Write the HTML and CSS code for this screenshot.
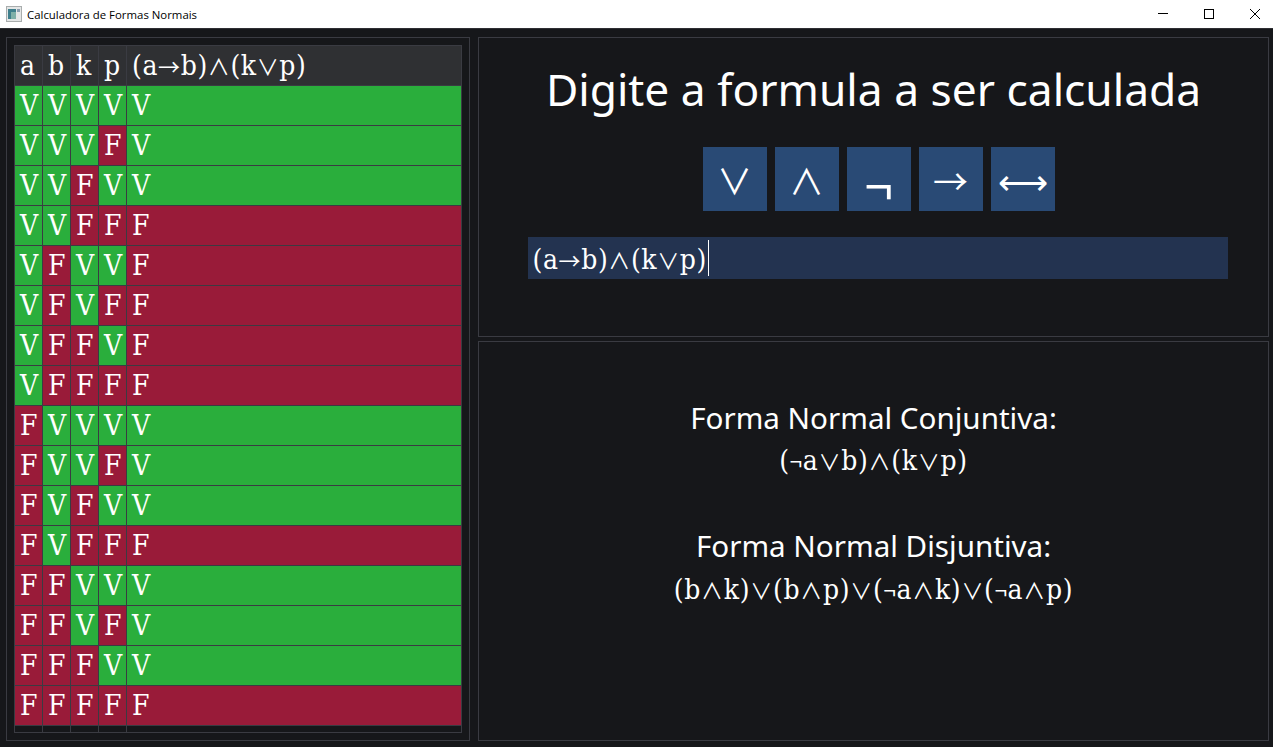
FILE: index.html
```html
<!DOCTYPE html>
<html lang="en">
<head>
  <meta charset="UTF-8">
  <title>Calculadora de Formas Normais</title>
  <link rel="stylesheet" href="styles.css">
</head>
<body>
<header class="titlebar">
  <svg class="appIcon" width="16" height="16" viewBox="0 0 16 16">
    <rect x="0.5" y="0.5" width="15" height="15" fill="#e4e6e6" stroke="#a9adad"/>
    <rect x="2" y="3" width="8" height="10" fill="#3e7f8c"/>
    <rect x="5" y="6" width="5" height="7" fill="#7fb0a8"/>
    <rect x="11" y="3" width="3" height="3" fill="#8b9eb0"/>
  </svg>
  <span class="windowTitle">Calculadora de Formas Normais</span>
  <div class="windowButtons">
    <svg width="12" height="12" viewBox="0 0 12 12"><path d="M1 5.5H11" stroke="#000"/></svg>
    <svg width="12" height="12" viewBox="0 0 12 12"><rect x="1.5" y="1.5" width="9" height="9" fill="none" stroke="#000"/></svg>
    <svg width="12" height="12" viewBox="0 0 12 12"><path d="M1 1L11 11M11 1L1 11" stroke="#000"/></svg>
  </div>
</header>

<main class="content">
  <section class="panel tablePanel">
    <table class="truthTable">
      <thead>
        <tr><th>a</th><th>b</th><th>k</th><th>p</th><th>(a<i>→</i>b)<i>∧</i>(k<i>∨</i>p)</th></tr>
      </thead>
      <tbody>
        <tr><td class="v">V</td><td class="v">V</td><td class="v">V</td><td class="v">V</td><td class="v">V</td></tr>
        <tr><td class="v">V</td><td class="v">V</td><td class="v">V</td><td class="f">F</td><td class="v">V</td></tr>
        <tr><td class="v">V</td><td class="v">V</td><td class="f">F</td><td class="v">V</td><td class="v">V</td></tr>
        <tr><td class="v">V</td><td class="v">V</td><td class="f">F</td><td class="f">F</td><td class="f">F</td></tr>
        <tr><td class="v">V</td><td class="f">F</td><td class="v">V</td><td class="v">V</td><td class="f">F</td></tr>
        <tr><td class="v">V</td><td class="f">F</td><td class="v">V</td><td class="f">F</td><td class="f">F</td></tr>
        <tr><td class="v">V</td><td class="f">F</td><td class="f">F</td><td class="v">V</td><td class="f">F</td></tr>
        <tr><td class="v">V</td><td class="f">F</td><td class="f">F</td><td class="f">F</td><td class="f">F</td></tr>
        <tr><td class="f">F</td><td class="v">V</td><td class="v">V</td><td class="v">V</td><td class="v">V</td></tr>
        <tr><td class="f">F</td><td class="v">V</td><td class="v">V</td><td class="f">F</td><td class="v">V</td></tr>
        <tr><td class="f">F</td><td class="v">V</td><td class="f">F</td><td class="v">V</td><td class="v">V</td></tr>
        <tr><td class="f">F</td><td class="v">V</td><td class="f">F</td><td class="f">F</td><td class="f">F</td></tr>
        <tr><td class="f">F</td><td class="f">F</td><td class="v">V</td><td class="v">V</td><td class="v">V</td></tr>
        <tr><td class="f">F</td><td class="f">F</td><td class="v">V</td><td class="f">F</td><td class="v">V</td></tr>
        <tr><td class="f">F</td><td class="f">F</td><td class="f">F</td><td class="v">V</td><td class="v">V</td></tr>
        <tr><td class="f">F</td><td class="f">F</td><td class="f">F</td><td class="f">F</td><td class="f">F</td></tr>
        <tr class="filler"><td></td><td></td><td></td><td></td><td></td></tr>
      </tbody>
    </table>
  </section>

  <div class="rightColumn">
    <section class="panel inputPanel">
      <h1 class="heading">Digite a formula a ser calculada</h1>
      <div class="operators">
        <button>∨</button>
        <button>∧</button>
        <button class="notButton">¬</button>
        <button>→</button>
        <button>⟷</button>
      </div>
      <div class="formulaInput"><span class="formulaText">(a<i>→</i>b)<i>∧</i>(k<i>∨</i>p)</span></div>
    </section>

    <section class="panel resultPanel">
      <h2 class="resultTitle">Forma Normal Conjuntiva:</h2>
      <p class="resultFormula">(<i>¬</i>a<i>∨</i>b)<i>∧</i>(k<i>∨</i>p)</p>
      <h2 class="resultTitle second">Forma Normal Disjuntiva:</h2>
      <p class="resultFormula">(b<i>∧</i>k)<i>∨</i>(b<i>∧</i>p)<i>∨</i>(<i>¬</i>a<i>∧</i>k)<i>∨</i>(<i>¬</i>a<i>∧</i>p)</p>
    </section>
  </div>
</main>
</body>
</html>
```
FILE: styles.css
```css
html, body {
  height: 100%;
}

body {
  margin: 0;
  display: flex;
  flex-direction: column;
  background: #16171a;
  color: #fff;
  font-family: "Noto Sans", sans-serif;
  overflow: hidden;
}

/* operators inside formulas */
i {
  font-family: "Noto Sans CJK SC", sans-serif;
  font-style: normal;
  font-size: 22px;
  line-height: 1;
}

.titlebar {
  height: 29px;
  box-sizing: border-box;
  flex: none;
  display: flex;
  align-items: center;
  padding-left: 6px;
  background: #fff;
  color: #000;
  border-bottom: 1px solid #2e2f33;
}

.appIcon {
  flex: none;
}

.windowTitle {
  margin-left: 5px;
  font-family: "Open Sans", sans-serif;
  font-size: 11.4px;
}

.windowButtons {
  margin-left: auto;
  display: flex;
  gap: 34px;
  padding-right: 12px;
}

.content {
  flex: 1;
  display: flex;
  gap: 8px;
  padding: 8px 4px 6px 6px;
  min-height: 0;
}

.panel {
  border: 1px solid #3a3b42;
  box-sizing: border-box;
}

.tablePanel {
  width: 464px;
  flex: none;
  padding: 7px;
}

.truthTable {
  width: 100%;
  height: 688px;
  table-layout: fixed;
  border-collapse: separate;
  border-spacing: 0;
  border: 1px solid #3a3b42;
  font-family: "DejaVu Serif Condensed", "DejaVu Serif", serif;
  font-stretch: condensed;
  font-size: 28px;
  box-sizing: border-box;
}

.truthTable th,
.truthTable td {
  width: 28px;
  height: 40px;
  padding: 1px 0 0 5px;
  box-sizing: border-box;
  text-align: left;
  font-weight: normal;
  line-height: 38px;
  border-right: 1px solid #3a3b42;
  border-bottom: 1px solid #3a3b42;
}

.truthTable th {
  letter-spacing: 0.6px;
}

.truthTable th:last-child,
.truthTable td:last-child {
  width: auto;
  border-right: 0;
}

.truthTable th {
  background: #2f3033;
}

.truthTable .v {
  background: #2aae3c;
}

.truthTable .f {
  background: #991b39;
}

.truthTable .filler td {
  height: 6px;
  padding: 0;
  line-height: 0;
  border-bottom: 0;
  background: #16171a;
}

.rightColumn {
  flex: 1;
  display: flex;
  flex-direction: column;
  gap: 4px;
  min-width: 0;
}

.inputPanel {
  height: 300px;
  flex: none;
  display: flex;
  flex-direction: column;
  align-items: center;
}

.heading {
  margin: 21px 0 0;
  font-size: 44.3px;
  font-weight: normal;
  line-height: 60px;
}

.operators {
  display: flex;
  gap: 8px;
  margin-top: 28px;
  margin-left: 10px;
}

.operators button {
  width: 64px;
  height: 64px;
  padding: 0;
  border: 0;
  background: #294a75;
  color: #fff;
  font-family: "Noto Sans CJK SC", sans-serif;
  font-size: 35px;
}

.operators .notButton {
  font-size: 50px;
  padding-bottom: 14px;
}

.formulaInput {
  width: 700px;
  height: 42px;
  margin-top: 26px;
  margin-left: 8px;
  padding-left: 5px;
  box-sizing: border-box;
  display: flex;
  align-items: center;
  background: #233350;
  font-family: "DejaVu Serif Condensed", "DejaVu Serif", serif;
  font-stretch: condensed;
  font-size: 28px;
  letter-spacing: 0.6px;
}

.formulaText {
  padding-top: 4px;
  padding-right: 1px;
  border-right: 1px solid #fff;
  line-height: 32px;
}

.resultPanel {
  flex: 1;
  text-align: center;
  padding-top: 54px;
}

.resultTitle {
  margin: 0;
  font-size: 29.6px;
  font-weight: normal;
  line-height: 44px;
}

.resultTitle.second {
  margin-top: 42px;
  margin-bottom: 1px;
}

.resultFormula {
  margin: 0;
  font-family: "DejaVu Serif Condensed", "DejaVu Serif", serif;
  font-stretch: condensed;
  font-size: 28px;
  letter-spacing: 0.7px;
  line-height: 42px;
}
```
